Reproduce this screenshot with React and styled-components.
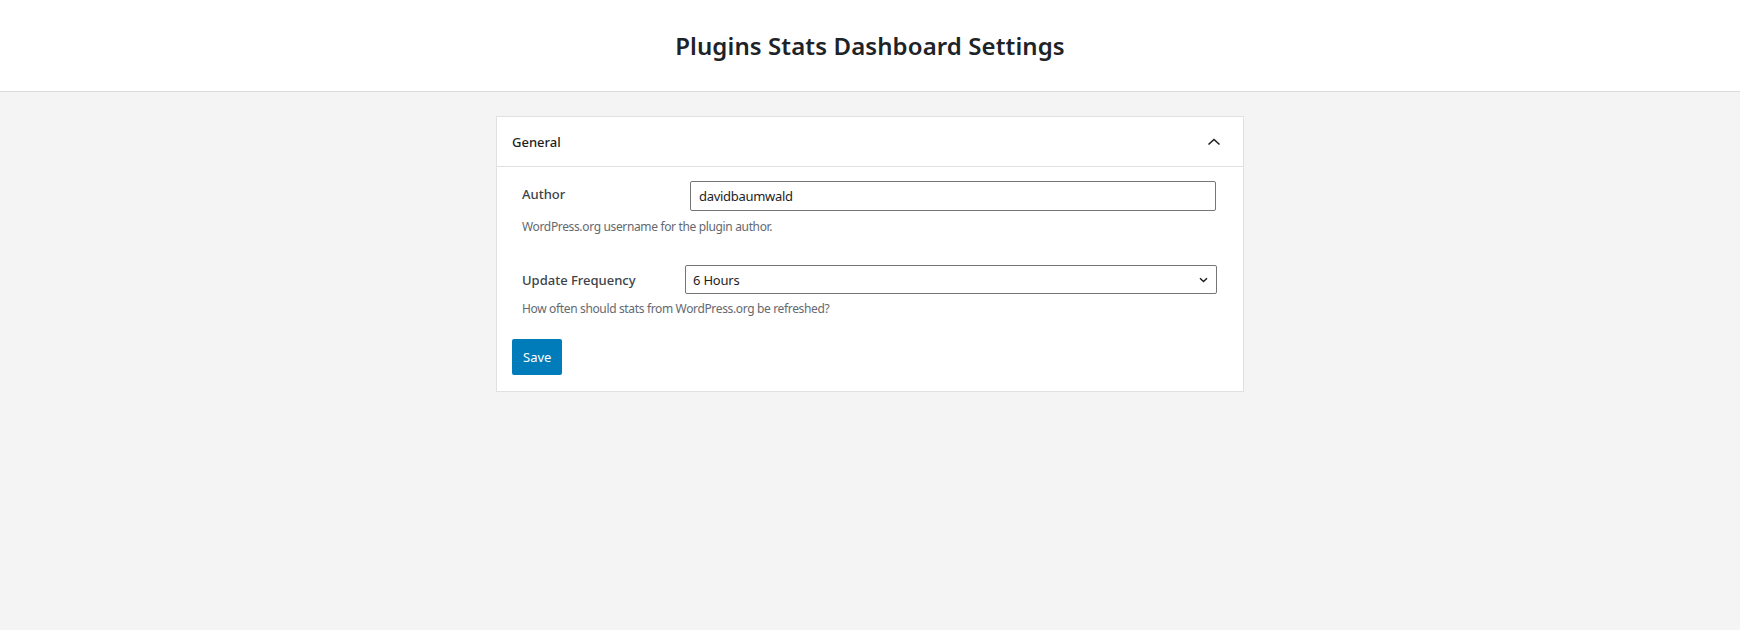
import styled, { createGlobalStyle } from "styled-components"
import { useState } from "react"

const Global = createGlobalStyle`
    html, body {
        margin: 0;
        padding: 0;
        background: #f4f4f4;
        font-family: "Noto Sans", "Open Sans", sans-serif;
        color: #1e1e1e;
    }
    #root {
        min-height: 630px;
    }
`

const Header = styled.header`
    background: #fff;
    border-bottom: 1px solid #dcdcde;
    height: 91px;
    display: flex;
    align-items: center;
    justify-content: center;
`

const Title = styled.h1`
    margin: 0;
    font-size: 24px;
    font-weight: 560;
    color: #1d2327;
    letter-spacing: 0.1px;
`

const Main = styled.main`
    display: flex;
    justify-content: center;
    padding-top: 24px;
`

const Panel = styled.section`
    width: 748px;
    background: #fff;
    border: 1px solid #e0e0e0;
    box-sizing: border-box;
`

const PanelHead = styled.button`
    width: 100%;
    height: 50px;
    display: flex;
    align-items: center;
    justify-content: space-between;
    padding: 0 22px 0 15px;
    background: none;
    border: none;
    border-bottom: 1px solid #e0e0e0;
    font-family: inherit;
    font-size: 13px;
    font-weight: 500;
    color: #1e1e1e;
    cursor: pointer;
`

const PanelBody = styled.div`
    padding: 14px 15px 16px;
`

const Row = styled.div`
    display: flex;
    align-items: ${p => (p.$center ? "center" : "flex-start")};
    margin-top: ${p => p.$top || 0}px;
    padding-left: 10px;
`

const Label = styled.label`
    width: ${p => p.$width}px;
    flex-shrink: 0;
    font-size: 13px;
    font-weight: 550;
    color: #3c434a;
    padding-top: ${p => (p.$center ? 0 : 4)}px;
`

const TextInput = styled.input`
    width: 526px;
    height: 30px;
    box-sizing: border-box;
    border: 1px solid #757575;
    border-radius: 2px;
    padding: 0 8px;
    font-family: inherit;
    font-size: 13px;
    letter-spacing: -0.3px;
    color: #1e1e1e;
    outline: none;
`

const SelectWrap = styled.div`
    position: relative;
    width: 532px;
`

const Select = styled.select`
    width: 100%;
    height: 29px;
    box-sizing: border-box;
    appearance: none;
    border: 1px solid #757575;
    border-radius: 2px;
    padding: 0 24px 0 7px;
    background: #fff;
    font-family: inherit;
    font-size: 13px;
    letter-spacing: -0.2px;
    color: #1e1e1e;
    outline: none;
`

const SelectArrow = styled.svg`
    position: absolute;
    right: 9px;
    top: 12px;
    pointer-events: none;
`

const Help = styled.p`
    margin: ${p => p.$top}px 0 0 10px;
    font-size: 12px;
    letter-spacing: -0.35px;
    color: #646970;
`

const Save = styled.button`
    margin-top: 22px;
    height: 36px;
    padding: 0 11px;
    background: #007cba;
    color: #fff;
    border: none;
    border-radius: 2px;
    font-family: inherit;
    font-size: 13px;
    cursor: pointer;
`

function App() {
    const [open, setOpen] = useState(true)
    const [author, setAuthor] = useState("davidbaumwald")
    const [freq, setFreq] = useState("6")

    return (
        <>
            <Global />
            <Header>
                <Title>Plugins Stats Dashboard Settings</Title>
            </Header>
            <Main>
                <Panel>
                    <PanelHead onClick={() => setOpen(!open)}>
                        General
                        <svg width="14" height="8" viewBox="0 0 14 8" fill="none">
                            <path d={open ? "M1.5 6.5L7 1.5L12.5 6.5" : "M1.5 1.5L7 6.5L12.5 1.5"} stroke="#1e1e1e" strokeWidth="1.6" />
                        </svg>
                    </PanelHead>
                    {open && (
                        <PanelBody>
                            <Row>
                                <Label $width={168}>Author</Label>
                                <TextInput value={author} onChange={(e) => setAuthor(e.target.value)} />
                            </Row>
                            <Help $top={7}>WordPress.org username for the plugin author.</Help>
                            <Row $center $top={30}>
                                <Label $center $width={163}>Update Frequency</Label>
                                <SelectWrap>
                                    <Select value={freq} onChange={(e) => setFreq(e.target.value)}>
                                        <option value="1">1 Hour</option>
                                        <option value="6">6 Hours</option>
                                        <option value="12">12 Hours</option>
                                        <option value="24">24 Hours</option>
                                    </Select>
                                    <SelectArrow width="9" height="6" viewBox="0 0 9 6" fill="none">
                                        <path d="M1 1.2L4.5 4.5L8 1.2" stroke="#1e1e1e" strokeWidth="1.5" />
                                    </SelectArrow>
                                </SelectWrap>
                            </Row>
                            <Help $top={6}>How often should stats from WordPress.org be refreshed?</Help>
                            <Save>Save</Save>
                        </PanelBody>
                    )}
                </Panel>
            </Main>
        </>
    )
}

export default App
